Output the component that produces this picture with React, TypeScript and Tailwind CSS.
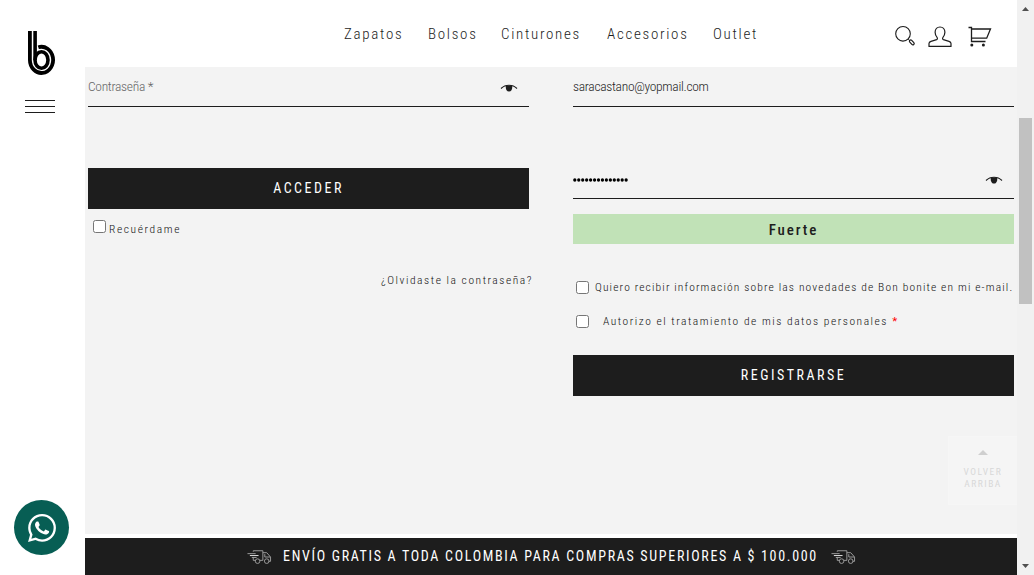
import type { ReactNode } from "react";

const navItems = [
  { label: "Zapatos", cls: "w-[84px]" },
  { label: "Bolsos", cls: "w-[73px]" },
  { label: "Cinturones", cls: "w-[106px]" },
  { label: "Accesorios", cls: "w-[106px]" },
  { label: "Outlet", cls: "w-[60px]" },
];

function Logo() {
  return (
    <svg className="block h-[45px] w-7" viewBox="0 0 28 45" fill="none" stroke="#000" strokeWidth="3.8">
      <path d="M1.900 0V29A11.600 13.100 0 1 0 10.300 16.300" />
      <path d="M7.100 0V29" strokeWidth="3.600" />
      <ellipse cx="13.500" cy="29" rx="6.500" ry="8.200" strokeWidth="3.600" />
    </svg>
  );
}

function SearchIcon() {
  return (
    <svg className="block h-6 w-6" viewBox="0 0 24 24" fill="none" stroke="#1d1d1d">
      <circle cx="9" cy="8.800" r="7.300" strokeWidth="1.100" />
      <path d="M14.200 14.100l1.600 1.600" strokeWidth="1" />
      <rect x="14.900" y="16.100" width="5.800" height="2.600" rx="1.300" transform="rotate(48 17.800 17.400)" strokeWidth="1.200" />
    </svg>
  );
}

function UserIcon() {
  return (
    <svg className="block h-6 w-6" viewBox="0 0 24 24" fill="none" stroke="#1d1d1d" strokeWidth="1.2" strokeLinejoin="round">
      <path d="M1 21.400V18.600C1 17.400 1.800 16.800 3 16.400L8.600 14.600C9.400 14.300 9.600 13.400 9.200 12.700C7.900 11.200 7.100 9.400 7.100 7.300C7.100 4.200 9.200 2 12 2S16.900 4.200 16.900 7.300C16.900 9.400 16.100 11.200 14.800 12.700C14.400 13.400 14.600 14.300 15.400 14.600L21 16.400C22.200 16.800 23 17.400 23 18.600V21.400Z" />
    </svg>
  );
}

function CartIcon() {
  return (
    <svg className="block h-6 w-6" viewBox="0 0 24 24" fill="none" stroke="#1d1d1d" strokeWidth="1.3">
      <path d="M.5 2.500H3.500V16.500H17.500" />
      <path d="M3.500 4H22.500L18.700 13.200H3.500" />
      <circle cx="3.800" cy="20" r="1.500" fill="#1d1d1d" stroke="none" />
      <circle cx="15.400" cy="20" r="1.500" fill="#1d1d1d" stroke="none" />
    </svg>
  );
}

function EyeIcon() {
  return (
    <svg className="mt-[3px] block h-2.5 w-[18px]" viewBox="0 0 18 10" fill="none">
      <path d="M1 5.500C3.300 3.200 6 2.200 9 2.200S14.700 3.200 17 5.500" stroke="#1d1d1d" strokeWidth="1.100" />
      <path d="M5.800 2.500H12.200C12.600 6 11.500 8.600 9 8.600S5.400 6 5.800 2.500Z" fill="#1d1d1d" />
    </svg>
  );
}

function TruckIcon() {
  return (
    <svg className="block h-4 w-[25px]" viewBox="0 0 26 16" fill="none" stroke="#9c9c9c" strokeWidth="1">
      <path d="M6.500 2.500V1.500H16.500V11.500H13.500M6.500 8.500V11.500H8.500M16.500 3.500H20.500L24.500 8V12.500H22.500M18.500 5V8H24" />
      <path d="M.5 4.500H9M5 8.500H10" />
      <path d="M3 6.500H12" stroke="#e8e8e8" />
      <circle cx="11" cy="12.300" r="2.400" />
      <circle cx="20.500" cy="12.300" r="2.400" />
    </svg>
  );
}

function WhatsAppIcon() {
  return (
    <svg className="block h-7 w-7" viewBox="0 0 24 24" fill="#fff">
      <path d="M17.472 14.382c-.297-.149-1.758-.867-2.030-.967-.273-.099-.471-.148-.670.150-.197.297-.767.966-.940 1.164-.173.199-.347.223-.644.075-.297-.150-1.255-.463-2.390-1.475-.883-.788-1.480-1.761-1.653-2.059-.173-.297-.018-.458.130-.606.134-.133.298-.347.446-.520.149-.174.198-.298.298-.497.099-.198.050-.371-.025-.520-.075-.149-.669-1.612-.916-2.207-.242-.579-.487-.500-.669-.510-.173-.008-.371-.010-.570-.010-.198 0-.520.074-.792.372-.272.297-1.040 1.016-1.040 2.479 0 1.462 1.065 2.875 1.213 3.074.149.198 2.096 3.200 5.077 4.487.709.306 1.262.489 1.694.625.712.227 1.360.195 1.871.118.571-.085 1.758-.719 2.006-1.413.248-.694.248-1.289.173-1.413-.074-.124-.272-.198-.570-.347m-5.421 7.403h-.004a9.870 9.870 0 01-5.031-1.378l-.361-.214-3.741.982.998-3.648-.235-.374a9.860 9.860 0 01-1.510-5.260c.001-5.450 4.436-9.884 9.888-9.884 2.640 0 5.122 1.030 6.988 2.898a9.825 9.825 0 012.893 6.994c-.003 5.450-4.437 9.884-9.885 9.884m8.413-18.297A11.815 11.815 0 0012.050 0C5.495 0 .160 5.335.157 11.892c0 2.096.547 4.142 1.588 5.945L.057 24l6.305-1.654a11.882 11.882 0 005.683 1.448h.005c6.554 0 11.890-5.335 11.893-11.893a11.821 11.821 0 00-3.480-8.413Z" />
    </svg>
  );
}

function Checkbox() {
  return (
    <input
      type="checkbox"
      className="m-0 block h-[13px] w-[13px] shrink-0 appearance-none rounded-[2.5px] border border-[#767676] bg-white"
    />
  );
}

function Field({ children, eye = false }: { children: ReactNode; eye?: boolean }) {
  return (
    <div className="flex h-10 w-[441px] items-center justify-between border-b border-[#1d1d1d] pr-[11px] text-[13.5px] font-light tracking-[-0.3px]">
      {children}
      {eye && <EyeIcon />}
    </div>
  );
}

function Submit({ children }: { children: ReactNode }) {
  return (
    <button className="block h-[41px] w-[441px] bg-[#1d1d1d] text-center text-[14px] font-normal leading-[41px] tracking-[2.5px] text-white">
      {children}
    </button>
  );
}

export default function App() {
  return (
    <div className="flex h-[575px] w-[1034px] overflow-hidden bg-white font-['Roboto_Condensed','Roboto',sans-serif] text-[#1d1d1d]">
      <aside className="flex w-[85px] shrink-0 flex-col pt-[31px]">
        <div className="pl-7">
          <Logo />
        </div>
        <div className="ml-[25px] mt-6 flex w-[30px] flex-col gap-[5px]">
          <div className="h-px bg-[#1d1d1d]" />
          <div className="h-px bg-[#1d1d1d]" />
          <div className="h-px bg-[#1d1d1d]" />
        </div>
        <div className="mb-5 ml-3.5 mt-auto flex h-[55px] w-[55px] items-center justify-center rounded-full bg-[#075e54]">
          <WhatsAppIcon />
        </div>
      </aside>

      <div className="flex w-[932px] shrink-0 flex-col">
        <header className="flex h-[67px] pl-[259px]">
          <nav className="flex h-[67px] w-[550px] pt-px text-[15px] font-light leading-[67px] tracking-[1.7px]">
            {navItems.map((n) => (
              <a key={n.label} className={n.cls}>{n.label}</a>
            ))}
          </nav>
          <div className="flex gap-[10px] pt-[25px]">
            <SearchIcon />
            <UserIcon />
            <span className="pl-[6px]"><CartIcon /></span>
          </div>
        </header>

        <main className="relative flex h-[467px] gap-11 bg-[#f3f3f3] pl-[3px]">
          <section className="w-[441px]">
            <Field eye>
              <span className="text-[#666]">Contraseña *</span>
            </Field>
            <div className="pt-[61px]">
              <Submit>ACCEDER</Submit>
            </div>
            <label className="flex h-10 gap-[3px] pl-[5px] pt-[11px] text-[11.5px] font-light tracking-[1.6px] text-[#111]">
              <Checkbox />
              <span className="leading-[19px]">Recuérdame</span>
            </label>
            <div className="-mr-1 mt-[23px] text-right text-[11.5px] font-light leading-4 tracking-[1.54px] text-[#111]">¿Olvidaste la contraseña?</div>
          </section>

          <section className="w-[441px]">
            <Field>
              <span>saracastano@yopmail.com</span>
            </Field>
            <div className="pt-[52px]">
              <Field eye>
                <svg className="mt-[3px] block h-1 w-[56px]" viewBox="0 0 56 4">
                  {Array.from({ length: 14 }, (_, i) => (
                    <circle key={i} cx={1.8 + i * 3.95} cy="2" r="1.650" fill="#000" />
                  ))}
                </svg>
              </Field>
            </div>
            <div className="mt-[15px] h-[30px] bg-[#c1e2b7] text-center text-[15px] font-medium leading-[32px] tracking-[1.9px]">Fuerte</div>
            <label className="mt-[37px] flex h-[34px] gap-[6px] pl-[3px] text-[11.5px] font-light text-[#111]">
              <Checkbox />
              <span className="whitespace-nowrap leading-[13px] tracking-[1.15px]">Quiero recibir información sobre las novedades de Bon bonite en mi e-mail.</span>
            </label>
            <label className="flex h-10 gap-[14px] pl-[3px] text-[11.5px] font-light text-[#111]">
              <Checkbox />
              <span className="whitespace-nowrap leading-[13px] tracking-[1.53px]">
                Autorizo el tratamiento de mis datos personales <b className="text-[#f00]">*</b>
              </span>
            </label>
            <Submit>REGISTRARSE</Submit>
          </section>

          <button className="absolute right-0 top-[369px] flex h-[69px] w-[69px] flex-col items-center border border-r-0 border-[#f6f6f6] bg-[#f5f5f5] pt-[13px] text-[9.5px] font-normal leading-3 tracking-[1.5px] text-[#d8d8d8]">
            <svg className="mb-[11px] block h-[5px] w-2.5" viewBox="0 0 10 5"><path d="M0 5L5 0L10 5Z" fill="#cfcfcf" /></svg>
            <span>VOLVER</span>
            <span>ARRIBA</span>
          </button>
        </main>

        <footer className="mt-1 flex h-[37px] items-center bg-[#1d1d1d] pl-[162px] text-[14px] font-normal tracking-[1.68px] text-white">
          <TruckIcon />
          <span className="ml-[11px] w-[548px] whitespace-nowrap">ENVÍO GRATIS A TODA COLOMBIA PARA COMPRAS SUPERIORES A $ 100.000</span>
          <TruckIcon />
        </footer>
      </div>

      <div className="flex w-[17px] shrink-0 flex-col items-center bg-[#f1f1f1] pb-[7px] pt-[7px]">
        <svg className="block h-1 w-[7px]" viewBox="0 0 7 4"><path d="M0 4L3.500 0L7 4Z" fill="#505050" /></svg>
        <div className="mt-[107px] h-[186px] w-[13px] bg-[#c1c1c1]" />
        <svg className="mt-auto block h-1 w-[7px]" viewBox="0 0 7 4"><path d="M0 0H7L3.500 4Z" fill="#505050" /></svg>
      </div>
    </div>
  );
}
